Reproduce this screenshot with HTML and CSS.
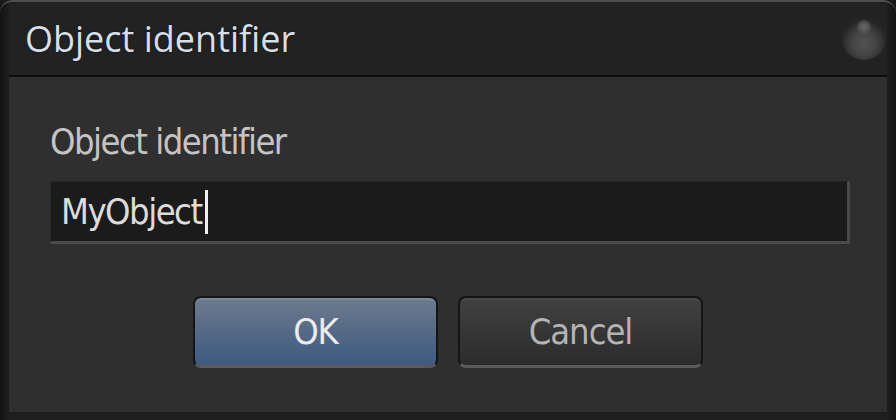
FILE: index.html
```html
<!DOCTYPE html>
<html lang="en">

<head>
    <meta charset="utf-8">
    <meta name="viewport" content="width=device-width, initial-scale=1.0">
    <title>Object identifier</title>
    <link rel="stylesheet" href="styles.css">
</head>

<body>
    <div class="window">
        <header class="titlebar">
            <h1>Object identifier</h1>
            <span class="knob"></span>
        </header>

        <main class="content">
            <label class="field_label" for="ident">Object identifier</label>
            <div class="field">
                <span class="field_text">MyObject</span><span class="caret"></span>
            </div>

            <div class="buttons">
                <button class="btn ok">OK</button>
                <button class="btn cancel">Cancel</button>
            </div>
        </main>
    </div>
</body></html>
```

FILE: styles.css
```css
* {
    margin: 0;
    padding: 0;
    box-sizing: border-box;
}

html,
body {
    width: 896px;
    height: 420px;
    background: #1a1a1a;
    overflow: hidden;
}

.window {
    display: flex;
    flex-direction: column;
    width: 896px;
    height: 420px;
    padding: 0 9px 8px 9px;
    background: linear-gradient(90deg, #121212, #1e1e1e 9px, #1e1e1e 887px, #141414);
    border-top: 2px solid #4e4e4e;
    border-radius: 13px 13px 0 0;
}

.titlebar {
    display: flex;
    align-items: center;
    justify-content: space-between;
    height: 75px;
    padding-left: 16px;
    background: #222222;
    border-bottom: 2px solid #0e0e0e;
}

.titlebar h1 {
    font-family: "Open Sans", "Noto Sans", sans-serif;
    font-weight: 400;
    font-size: 36px;
    line-height: 44px;
    color: #d6dfe8;
    text-shadow: 0 0 2px rgba(0, 0, 0, 0.6);
}

.knob {
    width: 46px;
    height: 46px;
    margin-top: -3px;
    border-radius: 50%;
    background:
        radial-gradient(circle at 50% 28%, #666 0, #585858 4px, transparent 8px),
        radial-gradient(circle at 50% 64%, #525252 0, #444 12px, #2e2e2e 20px, #242424 23px);
}

.content {
    flex: 1;
    display: flex;
    flex-direction: column;
    padding: 41px 37px 0 41px;
    background: #2f2f2f;
    font-family: "DejaVu Sans Condensed", "DejaVu Sans", sans-serif;
    font-stretch: condensed;
    font-size: 36px;
    letter-spacing: -1.5px;
}

.field_label {
    line-height: 48px;
    color: #c4c4c4;
}

.field {
    display: flex;
    align-items: center;
    height: 63px;
    margin-top: 15px;
    padding-left: 10px;
    background: #1b1b1b;
    border-right: 3px solid #4a4a4a;
    border-bottom: 3px solid #4a4a4a;
    border-top: 1px solid #262626;
    border-left: 1px solid #262626;
}

.field_text {
    line-height: 48px;
    color: #dcdcdc;
}

.caret {
    width: 3px;
    height: 44px;
    margin-left: 3px;
    background: #f0f0f0;
}

.buttons {
    display: flex;
    justify-content: center;
    gap: 20px;
    margin-top: 52px;
    margin-left: -4px;
}

.btn {
    width: 245px;
    height: 72px;
    border: 2px solid #151515;
    border-bottom: 3px solid #5a5a5a;
    border-radius: 8px;
    font-family: "DejaVu Sans Condensed", "DejaVu Sans", sans-serif;
    font-stretch: condensed;
    font-size: 36px;
    letter-spacing: -1px;
    cursor: pointer;
}

.ok {
    background: linear-gradient(#6d7b8e, #556a86 50%, #3d5a82);
    color: #ececec;
    box-shadow: inset 0 2px 0 #7c889a;
}

.cancel {
    background: linear-gradient(#414141, #363636 50%, #2b2b2b);
    color: #b4b4b4;
    box-shadow: inset 0 2px 0 #4a4a4a;
}
```
